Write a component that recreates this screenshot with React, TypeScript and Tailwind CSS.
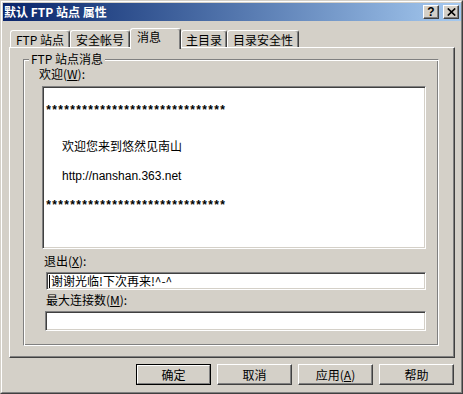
import React from "react";

const raised =
  "border border-t-white border-l-white border-r-[#404040] border-b-[#404040] shadow-[inset_-1px_-1px_0_#808080]";
const sunken =
  "border border-t-[#808080] border-l-[#808080] border-r-white border-b-white shadow-[inset_1px_1px_0_#404040,inset_-1px_-1px_0_#d4d0c8]";

function Tab({ label, w, selected }: { label: string; w: string; selected?: boolean }) {
  return (
    <div
      className={
        "flex bg-[#d4d0c8] border-t border-l border-r border-t-white border-l-white border-r-[#404040] rounded-t-[3px] shadow-[inset_-1px_0_0_#808080] leading-[14px] " +
        w +
        (selected
          ? " justify-start pl-[6px] h-[21px] -mb-[2px] pt-[1px] relative z-10"
          : " justify-center h-[17px] pt-[1px]")
      }
    >
      <span className={"whitespace-pre " + (selected ? "" : "pt-[1px]")}>{label}</span>
    </div>
  );
}

function Btn({ children, def }: { children: React.ReactNode; def?: boolean }) {
  if (def) {
    return (
      <div className="w-[75px] h-[21px] border border-black">
        <div className="h-full border border-t-white border-l-white border-r-[#808080] border-b-[#808080] flex items-center justify-center leading-[14px]">
          {children}
        </div>
      </div>
    );
  }
  return (
    <div className={"w-[75px] h-[21px] flex items-center justify-center leading-[14px] " + raised}>
      {children}
    </div>
  );
}

export default function App() {
  const stars = "******************************";
  return (
    <div className="w-[463px] h-[394px] bg-[#d4d0c8] border border-t-[#d4d0c8] border-l-[#d4d0c8] border-r-[#404040] border-b-[#404040] font-['Noto_Sans_CJK_SC',sans-serif] text-[12px] text-black overflow-hidden">
      <div className="h-full border border-t-white border-l-white border-r-[#808080] border-b-[#808080] pl-px pt-px flex flex-col">
        {/* title bar */}
        <div className="h-[18px] shrink-0 flex items-center bg-linear-to-r from-[#0a246a] to-[#a6caf0] pl-px pr-[2px]">
          <span className="text-white font-bold leading-[18px] whitespace-pre">默认 FTP 站点 属性</span>
          <div className="ml-auto flex gap-[4px]">
            <div className={"w-[16px] h-[14px] bg-[#d4d0c8] flex items-center justify-center " + raised}>
              <span className="font-['Liberation_Sans',sans-serif] font-bold text-[12px] leading-[12px] -mt-[1px]">?</span>
            </div>
            <div className={"w-[16px] h-[14px] bg-[#d4d0c8] flex items-center justify-center " + raised}>
              <svg width="9" height="8" viewBox="0 0 9 8" className="-mt-[1px]">
                <path d="M0.8 0.5 L8.2 7.5 M8.2 0.5 L0.8 7.5" stroke="black" strokeWidth="1.7" />
              </svg>
            </div>
          </div>
        </div>

        {/* tabs */}
        <div className="mt-[7px] ml-[7px] h-[19px] flex items-end">
          <Tab label="FTP 站点" w="w-[60px]" />
          <Tab label="安全帐号" w="w-[60px]" />
          <Tab label="消息" w="w-[51px]" selected />
          <Tab label="主目录" w="w-[46px]" />
          <Tab label="目录安全性" w="w-[72px]" />
        </div>

        {/* panel */}
        <div className="ml-[6px] w-[446px] h-[311px] shrink-0 border border-t-white border-l-white border-r-[#404040] border-b-[#404040] shadow-[inset_-1px_-1px_0_#808080]">
          <div className="ml-[13px] mt-[11px] w-[416px] h-[287px] relative border border-t-[#808080] border-l-[#808080] border-r-white border-b-white shadow-[inset_1px_1px_0_white,inset_-1px_-1px_0_#808080] flex flex-col items-start">
            <span className="absolute left-[5px] -top-[8px] px-[2px] bg-[#d4d0c8] leading-[13px] whitespace-pre">
              FTP 站点消息
            </span>
            <span className="ml-[15px] mt-[7px] leading-[14px]">
              欢迎(<u>W</u>):
            </span>
            <div className={"ml-[18px] mt-[5px] w-[384px] h-[163px] bg-white pl-[2px] flex flex-col " + sunken}>
              <div className="mt-[17px] h-[15px] leading-[15px] font-['Liberation_Mono',monospace] text-[12px] tracking-[-1.2px] font-bold">
                {stars}
              </div>
              <div className="mt-[19px] ml-[17px] h-[15px] leading-[15px]">欢迎您来到悠然见南山</div>
              <div className="mt-[16px] ml-[17px] h-[15px] leading-[15px] font-['Liberation_Sans',sans-serif]">
                http://nanshan.363.net
              </div>
              <div className="mt-[15px] h-[15px] leading-[15px] font-['Liberation_Mono',monospace] text-[12px] tracking-[-1.2px] font-bold">
                {stars}
              </div>
            </div>
            <span className="ml-[20px] mt-[5px] leading-[14px]">
              退出(<u>X</u>):
            </span>
            <div className={"ml-[22px] mt-[4px] w-[380px] h-[18px] bg-white pl-[2px] flex items-center " + sunken}>
              <span className="w-px h-[13px] bg-black shrink-0" />
              <span className="ml-px leading-[14px]">谢谢光临!下次再来!^-^</span>
            </div>
            <span className="ml-[22px] mt-[3px] leading-[14px]">
              最大连接数(<u>M</u>):
            </span>
            <div className={"ml-[21px] mt-[4px] w-[381px] h-[20px] bg-white " + sunken} />
          </div>
        </div>

        {/* buttons */}
        <div className="mt-[6px] pr-[7px] flex justify-end gap-[6px]">
          <Btn def>确定</Btn>
          <Btn>取消</Btn>
          <Btn>
            <span>
              应用(<u>A</u>)
            </span>
          </Btn>
          <Btn>帮助</Btn>
        </div>
      </div>
    </div>
  );
}
